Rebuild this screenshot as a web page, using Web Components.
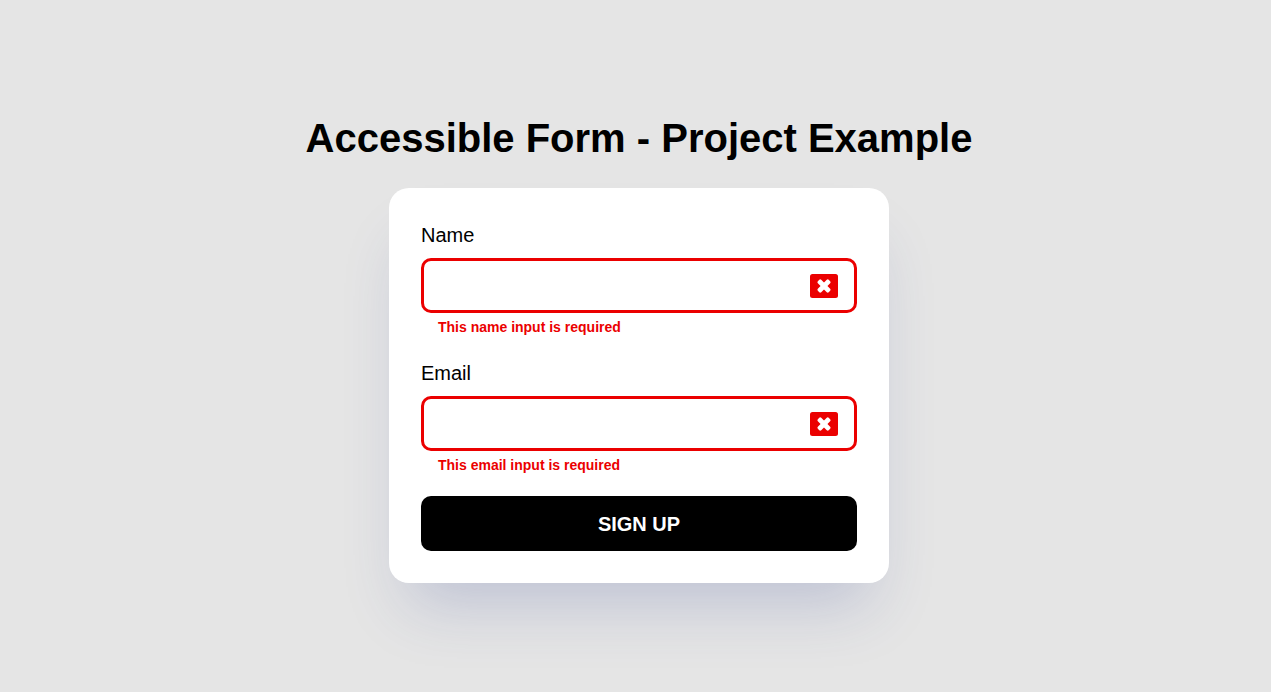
<!DOCTYPE html>
<html lang="en">
<head>
<meta charset="utf-8">
<meta name="viewport" content="width=device-width, initial-scale=1">
<title>Accessible Form - Project Example</title>
<style>
  body { margin: 0; background: #e5e5e5; color: #000; font: 20px/30px "Liberation Sans", Arial, sans-serif; }
</style>
</head>
<body>
<signup-page>
  <span slot="title">Accessible Form - Project Example</span>
  <signup-form></signup-form>
</signup-page>
<script>
customElements.define('signup-page', class extends HTMLElement {
  constructor() {
    super();
    this.attachShadow({ mode: 'open' }).innerHTML = `
      <style>
        :host { display: block; }
        main { box-sizing: border-box; min-height: 100vh; padding: 0 0 1px 7px; display: flex; flex-direction: column; align-items: center; justify-content: center; gap: 20px; }
        h1 { margin: 0; font-size: 40px; line-height: 60px; text-align: center; }
      </style>
      <main><h1><slot name="title"></slot></h1><slot></slot></main>`;
  }
});

customElements.define('form-field', class extends HTMLElement {
  connectedCallback() {
    if (this.shadowRoot) return;
    const name = this.getAttribute('name');
    this.attachShadow({ mode: 'open' }).innerHTML = `
      <style>
        :host { display: block; }
        label { display: block; margin-bottom: 8px; }
        .control { display: grid; align-items: center; }
        input, svg { grid-area: 1 / 1; }
        input { box-sizing: border-box; width: 100%; height: 55px; padding: 0 56px 0 16px; border: 3px solid #eb0000; border-radius: 10px; background: #fff; font: inherit; outline: 0; }
        input:focus-visible { box-shadow: 0 0 0 3px #eb000040; }
        svg { justify-self: end; margin: 1px 19px 0 0; pointer-events: none; }
        p { margin: 4px 0 0; padding-left: 17px; color: #eb0000; font-size: 14px; font-weight: bold; line-height: 21px; }
      </style>
      <label for="${name}">${this.getAttribute('label')}</label>
      <div class="control">
        <input id="${name}" name="${name}" type="${this.getAttribute('type')}" required aria-invalid="true" aria-describedby="error">
        <svg width="28" height="24" viewBox="0 0 28 24" aria-hidden="true">
          <rect width="28" height="24" rx="2.5" fill="#eb0000"/>
          <g transform="translate(14 12) rotate(45)" fill="#fff">
            <rect x="-7.7" y="-2.4" width="15.4" height="4.8" rx="1.4"/>
            <rect x="-2.4" y="-7.7" width="4.8" height="15.4" rx="1.4"/>
          </g>
        </svg>
      </div>
      <p id="error"><slot></slot></p>`;
  }
});

customElements.define('signup-form', class extends HTMLElement {
  constructor() {
    super();
    this.attachShadow({ mode: 'open' }).innerHTML = `
      <style>
        :host { display: block; width: 100%; max-width: 500px; }
        form { display: flex; flex-direction: column; gap: 20px; padding: 32px; border-radius: 20px; background: #fff; box-shadow: 0 40px 60px -20px rgba(50, 68, 150, 0.22); }
        button { height: 55px; padding: 0 16px; border: 0; border-radius: 10px; background: #000; color: #fff; font: bold 20px/30px "Liberation Sans", Arial, sans-serif; cursor: pointer; }
      </style>
      <form novalidate>
        <form-field name="name" type="text" label="Name">This name input is required</form-field>
        <form-field name="email" type="email" label="Email">This email input is required</form-field>
        <button type="submit">SIGN UP</button>
      </form>`;
  }
});
</script>
</body>
</html>
